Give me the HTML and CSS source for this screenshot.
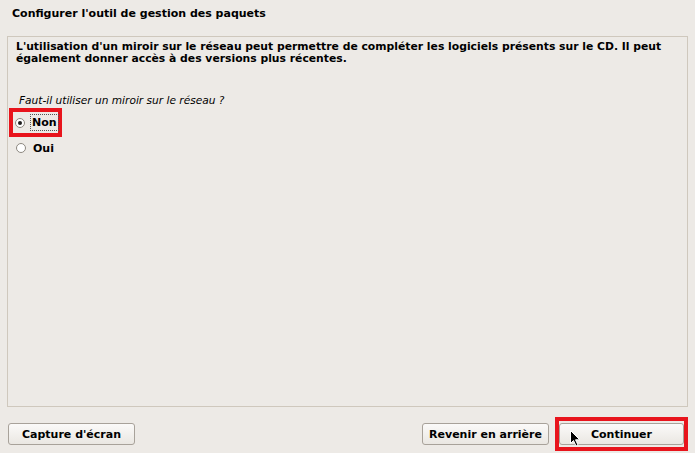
FILE: index.html
```html
<!DOCTYPE html>
<html lang="fr">
<head>
<meta charset="utf-8">
<link rel="stylesheet" href="styles.css">
</head>
<body>
<div class="app">
  <h1 class="title">Configurer l'outil de gestion des paquets</h1>
  <div class="panel">
    <p class="desc">L'utilisation d'un miroir sur le réseau peut permettre de compléter les logiciels présents sur le CD. Il peut également donner accès à des versions plus récentes.</p>
    <p class="question">Faut-il utiliser un miroir sur le réseau ?</p>
    <div class="options">
      <label class="opt opt-hl"><span class="radio checked"></span><span class="opt-text focus">Non</span></label>
      <label class="opt"><span class="radio"></span><span class="opt-text">Oui</span></label>
    </div>
  </div>
  <div class="footer">
    <button class="btn">Capture d'écran</button>
    <div class="spacer"></div>
    <button class="btn">Revenir en arrière</button>
    <div class="btn-hl">
      <button class="btn btn-main">Continuer</button>
      <svg class="cursor" width="11" height="17" viewBox="0 0 11 17"><path d="M0.5 0.5 L0.5 13.5 L3.5 10.5 L6 16 L8 15 L5.5 9.8 L9.8 9.8 Z" fill="#000" stroke="#fff" stroke-width="1"/></svg>
    </div>
  </div>
</div>
</body>
</html>
```
FILE: styles.css
```css
html, body {
  margin: 0;
  padding: 0;
  background: #edeae6;
}
.app {
  width: 695px;
  height: 453px;
  display: flex;
  flex-direction: column;
  font-family: "DejaVu Sans", sans-serif;
  color: #000;
}
.title {
  margin: 0;
  padding: 7px 0 0 12px;
  height: 36px;
  box-sizing: border-box;
  font-size: 11px;
  font-weight: bold;
  line-height: 14px;
}
.panel {
  margin: 0 7px;
  height: 371px;
  box-sizing: border-box;
  border: 1px solid #cfc8bd;
  padding: 4px 8px;
}
.desc {
  margin: 0;
  font-size: 10.8px;
  font-weight: bold;
  line-height: 12px;
}
.question {
  margin: 29px 0 0 3px;
  font-size: 10.6px;
  font-style: italic;
  line-height: 12px;
}
.options {
  display: flex;
  flex-direction: column;
  margin-top: 2px;
  gap: 1px;
}
.opt {
  display: flex;
  align-items: center;
  height: 20px;
  font-size: 11px;
  font-weight: bold;
  box-sizing: border-box;
  width: 53px;
}
.opt-hl {
  margin-left: -7px;
  height: 29px;
  border: 4px solid #e8141c;
  padding-left: 2px;
}
.radio {
  width: 10px;
  height: 10px;
  border-radius: 50%;
  border: 1px solid #8d8880;
  background: #fff;
  box-sizing: border-box;
  position: relative;
  flex: none;
}
.radio.checked::after {
  content: "";
  position: absolute;
  left: 2px;
  top: 2px;
  width: 4px;
  height: 4px;
  border-radius: 50%;
  background: #1e1e1e;
}
.opt-text {
  margin-left: 5px;
  padding: 1px 1px;
  line-height: 13px;
  border: 1px dotted transparent;
}
.opt-text.focus {
  border-color: #555;
}
.footer {
  display: flex;
  align-items: flex-start;
  padding: 16px 7px 0 8px;
  flex: 1;
}
.spacer {
  flex: 1;
}
.btn {
  width: 127px;
  height: 22px;
  border: 1px solid #a8a29a;
  border-radius: 3px;
  background: linear-gradient(#fbfaf9, #eae7e2);
  font-family: "DejaVu Sans", sans-serif;
  font-size: 11px;
  font-weight: bold;
  color: #000;
  padding: 0;
}
.btn-hl {
  position: relative;
  margin: -6px 0 0 6px;
  border: 4px solid #e8141c;
  padding: 2px 0;
  display: flex;
}
.btn-main {
  width: 125px;
}
.cursor {
  position: absolute;
  left: 11px;
  top: 9px;
}
```
